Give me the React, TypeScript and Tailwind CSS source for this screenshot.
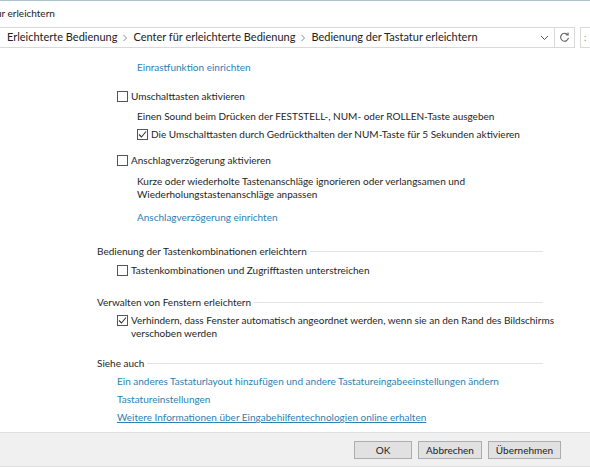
import React from 'react';

const font = { fontFamily: 'Lato, "Noto Sans", sans-serif' };

const Box: React.FC<{ checked?: boolean }> = ({ checked }) => (
  <span className="inline-flex w-[11px] h-[11px] border border-[#555] bg-white items-center justify-center shrink-0 mt-[1px]">
    {checked && (
      <svg width="9" height="9" viewBox="0 0 9 9">
        <path d="M1 4.5 L3.5 7 L8 1.5" fill="none" stroke="#333" strokeWidth="1.1" />
      </svg>
    )}
  </span>
);

const Check: React.FC<{ checked?: boolean; children: React.ReactNode; className?: string }> = ({ checked, children, className = '' }) => (
  <div className={`flex items-start gap-[3px] leading-[13px] ${className}`}>
    <Box checked={checked} />
    <span className="whitespace-nowrap">{children}</span>
  </div>
);

const Heading: React.FC<{ text: string; className?: string }> = ({ text, className = '' }) => (
  <div className={`flex items-center h-[18px] pl-[97px] pr-[47px] ${className}`}>
    <span className="whitespace-nowrap">{text}</span>
    <div className="flex-1 border-t border-[#e3e3e3] ml-[3px]" />
  </div>
);

const Link: React.FC<{ children: React.ReactNode; className?: string; underline?: boolean }> = ({ children, className = '', underline }) => (
  <div className={`h-[18px] leading-[18px] whitespace-nowrap text-[#2f7fb0] ${underline ? 'underline' : ''} ${className}`}>{children}</div>
);

const Chevron = () => (
  <svg width="6" height="8" viewBox="0 0 6 8" className="mx-[5px]">
    <path d="M1.5 1 L4.5 4 L1.5 7" fill="none" stroke="#8a8a8a" strokeWidth="1" />
  </svg>
);

export default function App() {
  return (
    <div className="w-[590px] h-[467px] bg-white text-[10px] text-[#1e1e1e] overflow-hidden flex flex-col" style={font}>
      <div className="h-[25px] border-t border-[#a9c6cc] flex items-center text-[10px] text-[#222] -ml-[4px] whitespace-nowrap">
        ur erleichtern
      </div>

      <div className="h-[23px] flex items-center mt-[1px]">
        <div className="flex-1 h-[21px] border border-[#d9d9d9] -ml-[1px] flex items-center text-[11px] text-[#222] pl-[7px] pr-[2px] whitespace-nowrap">
          <span>Erleichterte Bedienung</span>
          <Chevron />
          <span>Center für erleichterte Bedienung</span>
          <Chevron />
          <span>Bedienung der Tastatur erleichtern</span>
          <span className="flex-1" />
          <svg width="9" height="6" viewBox="0 0 9 6" className="mr-[3px]">
            <path d="M1 1 L4.5 4.5 L8 1" fill="none" stroke="#555" strokeWidth="1" />
          </svg>
        </div>
        <div className="w-[20px] h-[21px] border border-l-0 border-[#d9d9d9] flex items-center justify-center">
          <svg width="11" height="11" viewBox="0 0 12 12">
            <path d="M9.5 3.2 A4.3 4.3 0 1 0 10.3 6.5" fill="none" stroke="#555" strokeWidth="1.1" />
            <path d="M7.2 3 L10 3.3 L9.8 0.5" fill="none" stroke="#555" strokeWidth="1.1" />
          </svg>
        </div>
        <div className="w-[10px] ml-[5px] h-[21px] border border-r-0 border-[#d9d9d9] flex items-center pl-[3px] text-[#888]">
          <span className="text-[9px]">:</span>
        </div>
      </div>

      <div className="flex flex-col">
        <Link className="mt-[9px] pl-[137px]">Einrastfunktion einrichten</Link>

        <Check className="mt-[14px] pl-[117px] h-[18px] items-center">Umschalttasten aktivieren</Check>
        <div className="pl-[137px] h-[18px] leading-[18px] whitespace-nowrap -mt-[1px]">
          Einen Sound beim Drücken der FESTSTELL-, NUM- oder ROLLEN-Taste ausgeben
        </div>
        <Check checked className="mt-[3px] pl-[137px] h-[18px] items-center">
          Die Umschalttasten durch Gedrückthalten der NUM-Taste für 5 Sekunden aktivieren
        </Check>

        <Check className="mt-[8px] pl-[117px] h-[18px] items-center">Anschlagverzögerung aktivieren</Check>
        <div className="mt-[3px] pl-[137px] leading-[13px] whitespace-nowrap">
          Kurze oder wiederholte Tastenanschläge ignorieren oder verlangsamen und
          <br />
          Wiederholungstastenanschläge anpassen
        </div>
        <Link className="mt-[7px] pl-[137px]">Anschlagverzögerung einrichten</Link>

        <Heading text="Bedienung der Tastenkombinationen erleichtern" className="mt-[16px]" />
        <Check className="mt-[4px] pl-[117px] h-[18px] items-center">Tastenkombinationen und Zugrifftasten unterstreichen</Check>

        <Heading text="Verwalten von Fenstern erleichtern" className="mt-[11px]" />
        <Check checked className="mt-[3px] pl-[117px]">
          Verhindern, dass Fenster automatisch angeordnet werden, wenn sie an den Rand des Bildschirms
          <br />
          verschoben werden
        </Check>

        <Heading text="Siehe auch" className="mt-[14px]" />
        <Link className="pl-[117px]">Ein anderes Tastaturlayout hinzufügen und andere Tastatureingabeeinstellungen ändern</Link>
        <Link className="pl-[117px]">Tastatureinstellungen</Link>
        <Link className="pl-[117px]" underline>Weitere Informationen über Eingabehilfentechnologien online erhalten</Link>
      </div>

      <div className="mt-auto h-[35px] bg-[#f0f0f0] border-t border-[#dfdfdf] border-b flex items-center justify-end gap-[6px] pr-[29px]">
        {['OK', 'Abbrechen', 'Übernehmen'].map((b, i) => (
          <button
            key={b}
            className={`h-[18px] bg-[#e1e1e1] border border-[#adadad] text-[10px] text-[#222] leading-none ${
              i === 0 ? 'w-[58px]' : i === 1 ? 'w-[64px]' : 'w-[73px]'
            }`}
          >
            {b}
          </button>
        ))}
      </div>
    </div>
  );
}
